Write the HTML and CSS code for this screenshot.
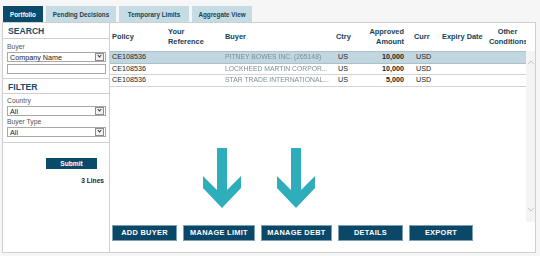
FILE: index.html
```html
<!DOCTYPE html>
<html lang="en">
<head>
    <meta charset="UTF-8">
    <title>Portfolio</title>
    <link rel="stylesheet" href="styles.css">
</head>
<body>
<div class="tabs">
    <a href="###" class="tab tab_active">Portfolio</a>
    <a href="###" class="tab tab_pending">Pending Decisions</a>
    <a href="###" class="tab tab_temp">Temporary Limits</a>
    <a href="###" class="tab tab_agg">Aggregate View</a>
</div>
<div class="frame">
    <div class="side">
        <div class="side_head">SEARCH</div>
        <div class="side_body side_search">
            <div class="side_label">Buyer</div>
            <div class="select"><span>Company Name</span><i class="select_arrow"></i></div>
            <div class="input"></div>
        </div>
        <div class="side_head side_head_filter">FILTER</div>
        <div class="side_body side_filter">
            <div class="side_label">Country</div>
            <div class="select"><span>All</span><i class="select_arrow"></i></div>
            <div class="side_label">Buyer Type</div>
            <div class="select"><span>All</span><i class="select_arrow"></i></div>
        </div>
        <div class="side_foot">
            <a href="###" class="btn_submit">Submit</a>
            <p class="count">3 Lines</p>
        </div>
    </div>
    <div class="panel">
        <div class="grid_head">
            <table class="grid">
                <colgroup>
                    <col class="c_policy"><col class="c_ref"><col class="c_buyer"><col class="c_ctry">
                    <col class="c_amount"><col class="c_curr"><col class="c_expiry"><col class="c_other">
                </colgroup>
                <tr>
                    <th>Policy</th>
                    <th>Your<br>Reference</th>
                    <th class="th_buyer">Buyer</th>
                    <th class="th_ctry">Ctry</th>
                    <th class="num">Approved<br>Amount</th>
                    <th class="th_curr">Curr</th>
                    <th>Expiry Date</th>
                    <th class="th_other">Other<br>Conditions</th>
                </tr>
            </table>
        </div>
        <div class="grid_scroll">
            <div class="grid_body">
                <table class="grid">
                    <colgroup>
                        <col class="c_policy"><col class="c_ref"><col class="c_buyer"><col class="c_ctry">
                        <col class="c_amount"><col class="c_curr"><col class="c_expiry"><col class="c_other">
                    </colgroup>
                    <tr class="row_active">
                        <td>CE108536</td><td></td><td class="td_buyer"><span class="blur">PITNEY BOWES INC. (265148)</span></td>
                        <td class="td_ctry">US</td><td class="num">10,000</td><td class="td_curr">USD</td><td></td><td></td>
                    </tr>
                    <tr>
                        <td>CE108536</td><td></td><td class="td_buyer"><span class="blur">LOCKHEED MARTIN CORPOR...</span></td>
                        <td class="td_ctry">US</td><td class="num">10,000</td><td class="td_curr">USD</td><td></td><td></td>
                    </tr>
                    <tr>
                        <td>CE108536</td><td></td><td class="td_buyer"><span class="blur">STAR TRADE INTERNATIONAL...</span></td>
                        <td class="td_ctry">US</td><td class="num">5,000</td><td class="td_curr">USD</td><td></td><td></td>
                    </tr>
                </table>
            </div>
            <div class="scrollbar">
                <svg class="scroll_up" width="8" height="6" viewBox="0 0 8 6"><polyline points="1,5 4,2 7,5" fill="none" stroke="#c4c4c4" stroke-width="1"/></svg>
                <svg class="scroll_down" width="8" height="6" viewBox="0 0 8 6"><polyline points="1,1 4,4 7,1" fill="none" stroke="#c4c4c4" stroke-width="1"/></svg>
            </div>
        </div>
        <div class="actions">
            <a href="###" class="btn btn_add">ADD BUYER</a>
            <a href="###" class="btn btn_limit">MANAGE LIMIT</a>
            <a href="###" class="btn btn_debt">MANAGE DEBT</a>
            <a href="###" class="btn btn_details">DETAILS</a>
            <a href="###" class="btn btn_export">EXPORT</a>
        </div>
        <svg class="pointer pointer_limit" width="38" height="60" viewBox="0 0 38 60">
            <polygon points="14,0 24,0 24,42 38,28 38,40 19,60 0,40 0,28 14,42" fill="#2eaebb"/>
        </svg>
        <svg class="pointer pointer_debt" width="38" height="60" viewBox="0 0 38 60">
            <polygon points="14,0 24,0 24,42 38,28 38,40 19,60 0,40 0,28 14,42" fill="#2eaebb"/>
        </svg>
    </div>
</div>
</body>
</html>
```

FILE: styles.css
```css
* {
    padding: 0;
    margin: 0;
    box-sizing: border-box;
}
a {
    text-decoration: none;
}
body {
    background: #f6f6f6;
    font-family: "Liberation Sans", Arial, sans-serif;
    color: #222;
}
.tabs {
    display: flex;
    gap: 3px;
    padding: 6px 0 0 3px;
    height: 22px;
}
.tabs .tab {
    display: flex;
    align-items: center;
    justify-content: center;
    height: 16px;
    background: #c5dce4;
    color: #1b3f57;
    font-size: 6.3px;
    font-weight: bold;
}
.tabs .tab_active {
    width: 40px;
    background: #0c4a6b;
    color: #fff;
}
.tabs .tab_pending { width: 70px; }
.tabs .tab_temp { width: 70px; }
.tabs .tab_agg { width: 60px; }

.frame {
    display: flex;
    margin-left: 2px;
    width: 534px;
    height: 231px;
}
.side {
    width: 109px;
    border: 1px solid #cfcfcf;
    background: #fff;
}
.side_head {
    height: 16px;
    padding: 3px 0 0 5px;
    border-bottom: 1px solid #cfcfcf;
    color: #1a4a6a;
    font-size: 8.6px;
    font-weight: bold;
    line-height: 10px;
}
.side_head_filter {
    height: 15px;
    padding-top: 3px;
}
.side_body {
    padding: 3px 3px 0 4px;
    border-bottom: 1px solid #cfcfcf;
}
.side_search {
    height: 40px;
}
.side_filter {
    height: 49px;
    padding-top: 2px;
}
.side_label {
    height: 10px;
    color: #555;
    font-size: 6.8px;
    line-height: 10px;
}
.select {
    display: flex;
    align-items: center;
    justify-content: space-between;
    height: 10px;
    margin-bottom: 1px;
    padding-left: 2px;
    border: 1px solid #a8a8a8;
    background: #fff;
    font-size: 7.2px;
    color: #222;
}
.select_arrow {
    position: relative;
    width: 9px;
    height: 8px;
    margin-right: 1px;
    border: 1px solid #8c8c8c;
    background: #f2f2f2;
}
.select_arrow:after {
    content: "";
    position: absolute;
    left: 2px;
    top: 0;
    width: 2px;
    height: 2px;
    border-right: 1px solid #333;
    border-bottom: 1px solid #333;
    transform: rotate(45deg);
}
.input {
    height: 10px;
    margin-top: 2px;
    border: 1px solid #a8a8a8;
    background: #fff;
}
.side_foot {
    padding: 9px 5px 0 0;
    text-align: right;
}
.btn_submit {
    display: inline-block;
    width: 51px;
    height: 11px;
    margin-right: 7px;
    background: #0c4a6b;
    color: #fff;
    font-size: 6.6px;
    font-weight: bold;
    line-height: 11px;
    text-align: center;
}
.count {
    margin-top: 7px;
    font-size: 6.6px;
    font-weight: bold;
    color: #222;
}

.panel {
    position: relative;
    flex: 1;
    display: flex;
    flex-direction: column;
    border: 1px solid #cfcfcf;
    border-left: 0;
    background: #fff;
}
.grid {
    width: 416px;
    table-layout: fixed;
    border-collapse: collapse;
}
.c_policy { width: 56px; }
.c_ref { width: 56px; }
.c_buyer { width: 110px; }
.c_ctry { width: 32px; }
.c_amount { width: 45px; }
.c_curr { width: 31px; }
.c_expiry { width: 49px; }
.c_other { width: 37px; }
.grid_head {
    width: 416px;
    height: 28px;
    overflow: hidden;
}
.grid_head th {
    height: 28px;
    padding-left: 2px;
    color: #163e59;
    font-size: 7.4px;
    font-weight: bold;
    line-height: 10px;
    text-align: left;
    vertical-align: middle;
    white-space: nowrap;
}
.grid_head .th_buyer { padding-left: 3px; }
.grid_head .th_ctry { padding-left: 4px; }
.grid_head .th_curr { padding-left: 5px; }
.grid_head .num {
    padding-right: 5px;
    text-align: right;
}
.grid_head .th_other {
    padding: 0;
    text-align: center;
    overflow: visible;
}
.grid_scroll {
    display: flex;
    height: 171px;
}
.grid_body {
    width: 416px;
}
.grid_body td {
    height: 11.5px;
    padding-left: 2px;
    border-bottom: 1px solid #d4d4d4;
    font-size: 7.2px;
    line-height: 10px;
    white-space: nowrap;
    overflow: hidden;
}
.grid_body .row_active td {
    background: #c2d6df;
    border-top: 1px solid #a9c1cd;
    border-bottom: 1px solid #a9c1cd;
}
.grid_body .row_active td:last-child {
    border-right: 1px solid #a9c1cd;
}
.grid_body .td_buyer { padding-left: 3px; }
.grid_body .td_ctry { padding-left: 6px; }
.grid_body .td_curr { padding-left: 7px; }
.grid_body .num {
    padding-right: 5px;
    text-align: right;
    font-weight: bold;
}
.blur {
    color: #7a8e9e;
    filter: blur(0.7px);
    font-size: 6.8px;
}
.scrollbar {
    display: flex;
    flex-direction: column;
    justify-content: space-between;
    align-items: center;
    width: 9px;
    padding: 8px 0 9px;
    background: #f4f4f4;
}
.actions {
    display: flex;
    gap: 6px;
    padding: 3px 0 0 2px;
}
.btn {
    height: 16px;
    border: 1px solid #7b9fb3;
    background: #0b4767;
    color: #fff;
    font-size: 7.4px;
    font-weight: bold;
    letter-spacing: 0.3px;
    line-height: 14px;
    text-align: center;
}
.btn_add { width: 65px; }
.btn_limit { width: 72px; }
.btn_debt { width: 71px; }
.btn_details { width: 65px; }
.btn_export { width: 64px; }
.pointer {
    position: absolute;
    top: 125px;
}
.pointer_limit { left: 93px; }
.pointer_debt { left: 167px; }
```
